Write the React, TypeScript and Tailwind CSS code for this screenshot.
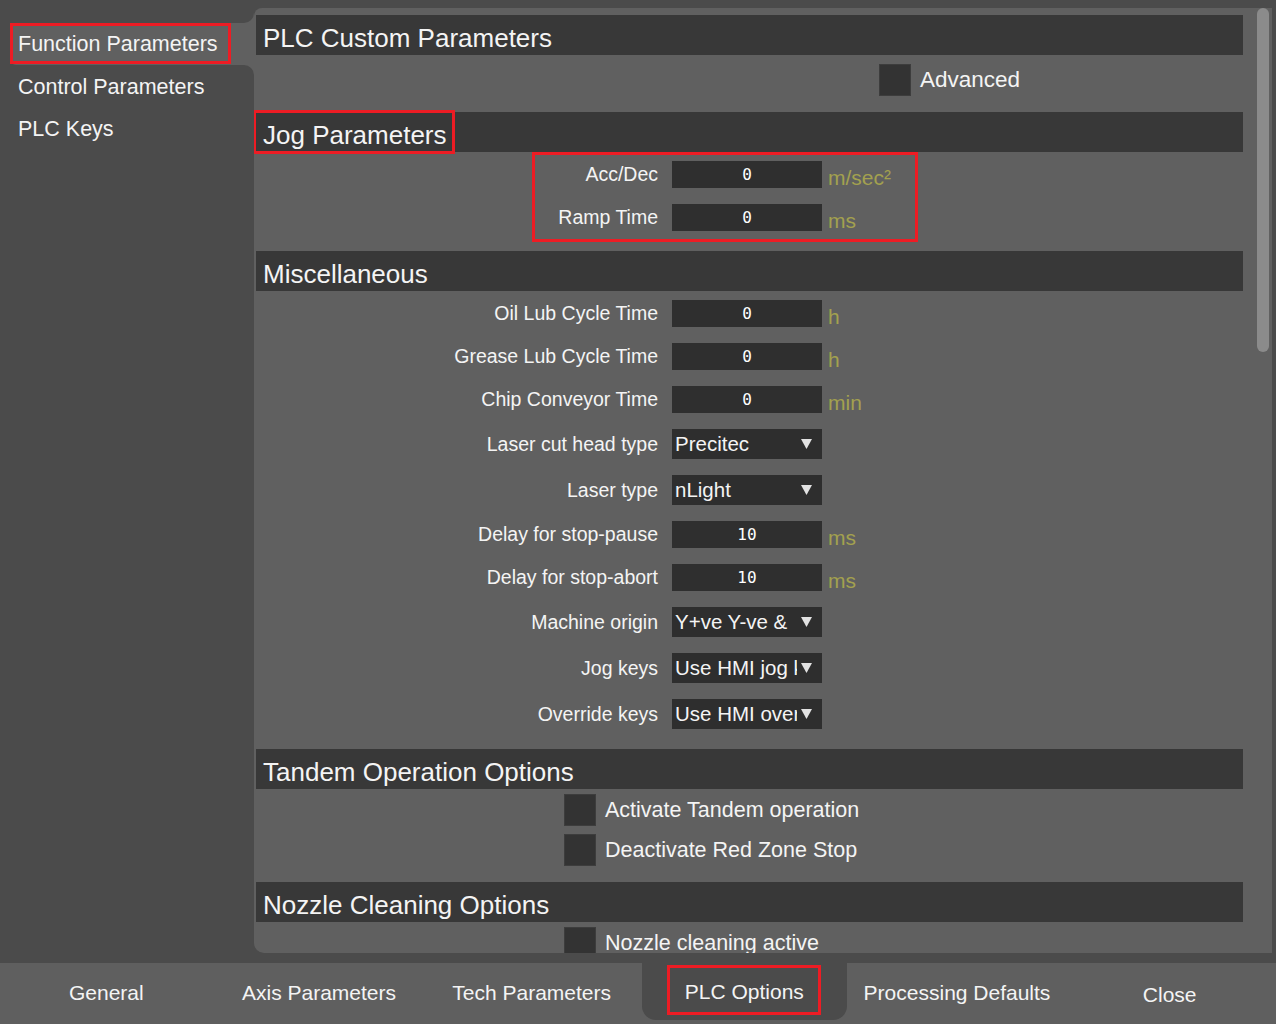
import React from 'react';

type Field =
  | { kind: 'input'; label: string; value: string; unit?: string }
  | { kind: 'select'; label: string; value: string };

const misc: Field[] = [
  { kind: 'input', label: 'Oil Lub Cycle Time', value: '0', unit: 'h' },
  { kind: 'input', label: 'Grease Lub Cycle Time', value: '0', unit: 'h' },
  { kind: 'input', label: 'Chip Conveyor Time', value: '0', unit: 'min' },
  { kind: 'select', label: 'Laser cut head type', value: 'Precitec' },
  { kind: 'select', label: 'Laser type', value: 'nLight' },
  { kind: 'input', label: 'Delay for stop-pause', value: '10', unit: 'ms' },
  { kind: 'input', label: 'Delay for stop-abort', value: '10', unit: 'ms' },
  { kind: 'select', label: 'Machine origin', value: 'Y+ve Y-ve &' },
  { kind: 'select', label: 'Jog keys', value: 'Use HMI jog keys' },
  { kind: 'select', label: 'Override keys', value: 'Use HMI override keys' },
];

const tabs = ['General', 'Axis Parameters', 'Tech Parameters', 'PLC Options', 'Processing Defaults', 'Close'];

const SectionHeader = ({ title, children }: { title: string; children?: React.ReactNode }) => (
  <div className="relative flex items-center h-[40px] pl-[7px] pt-[5px] bg-[#383838] text-[26px] text-[#f4f4f4] leading-none">
    {title}
    {children}
  </div>
);

const FieldRow = ({ field }: { field: Field }) => (
  <div className="flex items-center">
    <div className="w-[402px] pt-[1px] text-right text-[19.5px] text-[#f4f4f4] leading-none whitespace-nowrap">
      {field.label}
    </div>
    {field.kind === 'input' ? (
      <>
        <div className="ml-[14px] w-[150px] h-[27px] bg-[#2f2f2f] flex items-center justify-center font-['DejaVu_Sans_Mono',monospace] text-[16px] text-white">
          {field.value}
        </div>
        {field.unit && (
          <div className="ml-[6px] pt-[5px] text-[21px] text-[#a3a14f] leading-none">{field.unit}</div>
        )}
      </>
    ) : (
      <div className="ml-[14px] w-[150px] h-[30px] bg-[#2e2e2e] flex items-center">
        <span className="pl-[3px] w-[125px] overflow-hidden whitespace-nowrap text-[20.5px] text-[#f4f4f4] leading-[30px]">
          {field.value}
        </span>
        <svg width="11" height="10" viewBox="0 0 11 10" className="ml-[4px]">
          <polygon points="0,0 11,0 5.5,10" fill="#e2e2e2" />
        </svg>
      </div>
    )}
  </div>
);

const CheckRow = ({ label, left, className = '', size = 'text-[21.5px]' }: { label: string; left: string; className?: string; size?: string }) => (
  <div className={`flex items-center ${left} ${className}`}>
    <div className="w-8 h-8 bg-[#333333] border border-[#3d3d3d]" />
    <span className={`ml-[9px] pt-[1px] ${size} text-[#f4f4f4] leading-none`}>{label}</span>
  </div>
);

const App: React.FC = () => {
  return (
    <div className="w-[1276px] h-[1024px] bg-[#4b4b4b] flex flex-col overflow-hidden font-['Liberation_Sans',Arial,sans-serif]">
      <div className="flex h-[945px] mt-[8px]">
        {/* Sidebar */}
        <div className="w-[254px] shrink-0 pt-[5px] text-[21.5px] text-[#f4f4f4] leading-none">
          <div className="flex justify-end">
            <div className="w-[10px] h-[10px] bg-[#606060]">
              <div className="w-full h-full bg-[#4b4b4b] rounded-br-[10px]" />
            </div>
          </div>
          <div className="ml-[10px] h-[42px] bg-[#606060] rounded-l-[6px]">
            <div className="w-[221px] h-[41px] border-[3px] border-[#ed1c24] flex items-center pl-[5px] pt-[3px] whitespace-nowrap">
              Function Parameters
            </div>
          </div>
          <div className="flex justify-end h-0">
            <div className="w-[10px] h-[10px] bg-[#606060]">
              <div className="w-full h-full bg-[#4b4b4b] rounded-tr-[10px]" />
            </div>
          </div>
          <div className="h-[42px] flex items-center pl-[18px] pt-[3px]">Control Parameters</div>
          <div className="h-[42px] flex items-center pl-[18px] pt-[3px]">PLC Keys</div>
        </div>

        {/* Main panel */}
        <div className="w-[1018px] bg-[#606060] rounded-tl-[8px] rounded-bl-[10px] overflow-hidden flex">
          <div className="w-[987px] ml-[2px] pt-[7px]">
            <SectionHeader title="PLC Custom Parameters" />
            <CheckRow label="Advanced" left="ml-[623px]" className="mt-[9px]" size="text-[22.5px]" />

            <div className="mt-[16px]">
              <SectionHeader title="Jog Parameters">
                <div className="absolute left-[-3px] top-[-2px] w-[202px] h-[44px] border-[3px] border-[#ed1c24]" />
              </SectionHeader>
            </div>
            <div className="relative mt-[9px] flex flex-col gap-[16px]">
              <div className="absolute left-[276px] top-[-9px] w-[386px] h-[90px] border-[3px] border-[#ed1c24]" />
              <FieldRow field={{ kind: 'input', label: 'Acc/Dec', value: '0', unit: 'm/sec²' }} />
              <FieldRow field={{ kind: 'input', label: 'Ramp Time', value: '0', unit: 'ms' }} />
            </div>

            <div className="mt-[20px]">
              <SectionHeader title="Miscellaneous" />
            </div>
            <div className="mt-[9px] flex flex-col gap-[16px]">
              {misc.map((f) => (
                <FieldRow key={f.label} field={f} />
              ))}
            </div>

            <div className="mt-[20px]">
              <SectionHeader title="Tandem Operation Options" />
            </div>
            <CheckRow label="Activate Tandem operation" left="ml-[308px]" className="mt-[5px]" />
            <CheckRow label="Deactivate Red Zone Stop" left="ml-[308px]" className="mt-[8px]" />

            <div className="mt-[16px]">
              <SectionHeader title="Nozzle Cleaning Options" />
            </div>
            <CheckRow label="Nozzle cleaning active" left="ml-[308px]" className="mt-[5px]" />
          </div>

          {/* Scrollbar */}
          <div className="ml-[14px] w-[12px]">
            <div className="w-[12px] h-[344px] rounded-full bg-[#8b8b8b]" />
          </div>
        </div>
      </div>

      {/* Bottom tabs */}
      <div className="mt-[10px] h-[61px] bg-[#5f5f5f] grid grid-cols-6 text-[21px] text-[#f4f4f4] leading-none">
        {tabs.map((t) =>
          t === 'PLC Options' ? (
            <div key={t} className="flex justify-center">
              <div className="w-[205px] h-[57px] bg-[#4b4b4b] rounded-b-[14px] flex justify-center">
                <div className="mt-[2px] w-[154px] h-[50px] border-[3px] border-[#ed1c24] flex items-center justify-center pt-[2px]">
                  {t}
                </div>
              </div>
            </div>
          ) : (
            <div key={t} className={`flex items-center justify-center ${t === 'Close' ? 'pt-[2px]' : 'pb-[2px]'}`}>
              {t}
            </div>
          )
        )}
      </div>
    </div>
  );
};

export default App;
